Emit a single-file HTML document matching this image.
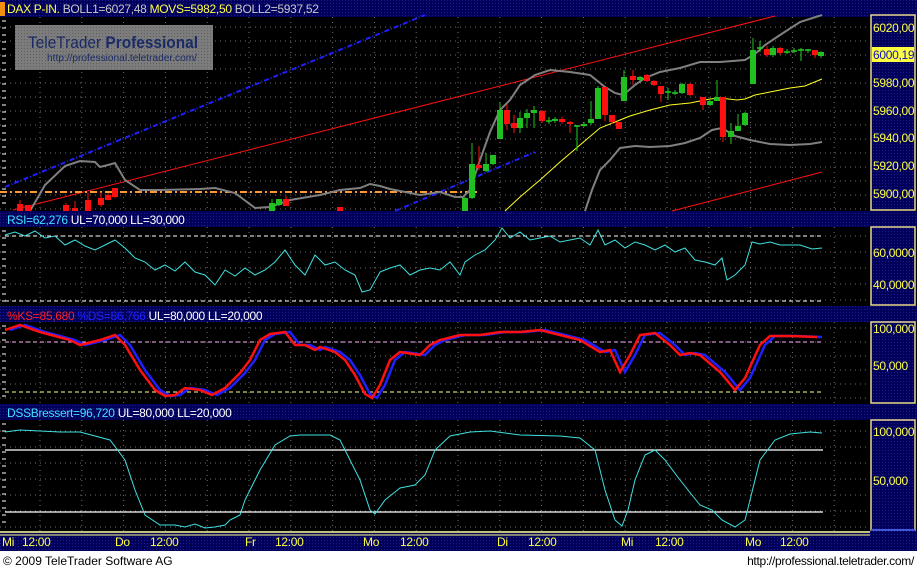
<!DOCTYPE html>
<html><head><meta charset="utf-8">
<style>
html,body{margin:0;padding:0;background:#000;width:917px;height:569px;overflow:hidden}
svg{display:block}
text{font-family:"Liberation Sans",sans-serif}
</style></head><body>
<svg id="s" width="917" height="569" viewBox="0 0 917 569" xmlns="http://www.w3.org/2000/svg">
<defs>
<pattern id="nv" width="3" height="3" patternUnits="userSpaceOnUse">
<rect width="3" height="3" fill="#00005a"/><rect width="1" height="1" fill="#1c1c90"/></pattern>
<pattern id="lg" width="3" height="3" patternUnits="userSpaceOnUse">
<rect width="3" height="3" fill="#7c7c7c"/><rect width="1" height="1" fill="#606060"/></pattern>
</defs>
<rect width="917" height="569" fill="#000"/>
<rect x="0" y="0" width="917" height="17" fill="url(#nv)"/>
<rect x="0" y="2" width="5" height="14" fill="#f0900f"/>
<rect x="0" y="211" width="917" height="16" fill="url(#nv)"/>
<rect x="0" y="306" width="917" height="16" fill="url(#nv)"/>
<rect x="0" y="404" width="917" height="16" fill="url(#nv)"/>
<rect x="0" y="531" width="917" height="20" fill="url(#nv)"/>
<line x1="0" y1="532" x2="870" y2="532" stroke="#ffff80" stroke-width="1.5"/>
<line x1="0" y1="535" x2="870" y2="535" stroke="#ffff80" stroke-width="1"/>
<rect x="0" y="551" width="917" height="18" fill="#fff"/>
<g stroke="#e8d890" stroke-width="1.5" fill="url(#nv)">
<rect x="871" y="15" width="44" height="195"/>
<rect x="871" y="227" width="44" height="78"/>
<rect x="871" y="322" width="44" height="81"/>
<rect x="871" y="420" width="44" height="110"/>
</g>
<rect x="871" y="531" width="46" height="20" fill="url(#nv)"/>
<line x1="871" y1="530" x2="915" y2="530" stroke="#3050ff" stroke-width="1.5"/>
<g id="grid"></g>
<rect x="15" y="25" width="198" height="45" fill="url(#lg)"/>
<text x="28" y="48" font-size="17" fill="#1a2a66" textLength="170" lengthAdjust="spacingAndGlyphs">TeleTrader <tspan font-weight="bold">Professional</tspan></text>
<text x="47" y="61" font-size="10" fill="#1a2a66" textLength="150" lengthAdjust="spacingAndGlyphs">http://professional.teletrader.com/</text>
<text x="7" y="13" font-size="12" letter-spacing="-0.3"><tspan fill="#ffff40">DAX P-IN.</tspan><tspan fill="#c8c8c8"> BOLL1=6027,48</tspan><tspan fill="#ffff40"> MOVS=5982,50</tspan><tspan fill="#c8c8c8"> BOLL2=5937,52</tspan></text>
<text x="7" y="224" font-size="12" letter-spacing="-0.3"><tspan fill="#40e0ff">RSI=62,276</tspan><tspan fill="#fff"> UL=70,000 LL=30,000</tspan></text>
<text x="7" y="320" font-size="12" letter-spacing="-0.3"><tspan fill="#ff2020">%KS=85,680</tspan><tspan fill="#2020ff"> %DS=86,766</tspan><tspan fill="#fff"> UL=80,000 LL=20,000</tspan></text>
<text x="7" y="417" font-size="12" letter-spacing="-0.3"><tspan fill="#40e0ff">DSSBressert=96,720</tspan><tspan fill="#fff"> UL=80,000 LL=20,000</tspan></text>
<polyline fill="none" stroke="#2020ff" stroke-width="2" stroke-dasharray="5,2,1,2" points="5,187 425,15"/>
<polyline fill="none" stroke="#2020ff" stroke-width="2" stroke-dasharray="5,2,1,2" points="395,211 535,152"/>
<line x1="13" y1="210" x2="775" y2="16" stroke="#ff1010" stroke-width="1"/>
<line x1="672" y1="211" x2="822" y2="172" stroke="#ff1010" stroke-width="1"/>
<line x1="0" y1="192" x2="478" y2="192" stroke="#ff9a30" stroke-width="2" stroke-dasharray="7,3,2,3"/>
<polyline fill="none" stroke="#808080" stroke-width="2" points="30,211 45,185 65,166 80,161 95,162 100,167 108,165 115,163 125,180 140,190 160,190 200,189 215,188 235,193 255,208 270,207 290,200 320,195 340,190 360,188 370,184 380,186 390,189 420,195 440,192 455,197 463,197 470,190 480,160 490,132 500,110 510,100 520,85 535,75 550,70 570,72 590,75 605,87 615,93 623,95 635,85 645,78 660,72 680,68 700,62 720,62 745,60 755,54 765,45 780,35 800,22 822,15"/>
<polyline fill="none" stroke="#808080" stroke-width="2" points="585,211 592,190 600,170 610,160 620,148 635,146 650,147 670,146 685,143 700,138 712,130 722,128 735,136 750,140 770,144 790,145 810,144 822,142"/>
<polyline fill="none" stroke="#ffff20" stroke-width="1" points="505,211 520,197 540,180 560,162 580,145 600,128 615,122 630,116 650,110 670,105 690,103 710,99 720,98 737,100 745,99 755,95 770,92 790,88 805,86 822,79"/>
<g id="candles"></g>
<line x1="5" y1="236" x2="823" y2="236" stroke="#fff" stroke-dasharray="4,3"/>
<line x1="5" y1="301" x2="823" y2="301" stroke="#fff" stroke-dasharray="4,3"/>
<polyline fill="none" stroke="#40e0e0" stroke-width="1" points="5,235 15,232 25,236 35,231 45,238 55,236 65,245 75,240 85,246 95,250 105,245 115,240 125,248 135,258 145,262 155,270 165,265 175,271 185,262 195,272 205,275 215,285 225,270 235,276 245,268 255,275 265,270 275,262 285,250 295,265 305,275 315,255 325,265 335,262 345,270 355,275 362,292 370,290 380,272 390,268 400,265 410,275 420,270 430,268 440,270 450,262 460,275 465,262 475,255 485,250 495,240 502,228 510,238 520,232 530,240 540,238 550,236 560,242 570,240 580,238 590,245 598,230 605,245 615,240 625,248 635,242 645,245 655,250 665,245 675,252 685,248 695,260 705,262 715,265 722,258 727,280 735,275 745,265 752,242 760,244 770,242 780,245 800,245 812,249 822,248"/>
<line x1="5" y1="342" x2="823" y2="342" stroke="#ffb0ff" stroke-dasharray="4,3"/>
<line x1="5" y1="392" x2="823" y2="392" stroke="#ffff90" stroke-dasharray="4,3"/>
<polyline id="kb" fill="none" stroke="#2020ff" stroke-width="2.5" transform="translate(5,0)" points=""/>
<polyline id="kr" fill="none" stroke="#ff1010" stroke-width="2.5" points="5,330 20,325 40,332 70,340 80,345 100,340 115,335 125,345 140,370 155,390 165,396 175,395 185,388 200,390 212,395 225,388 240,373 250,360 260,340 270,334 285,332 295,345 305,345 315,350 320,347 335,352 345,360 355,375 365,394 372,398 380,385 390,360 400,352 420,355 430,345 440,340 460,335 480,335 500,332 520,332 540,330 560,335 580,340 600,352 610,350 620,372 630,355 640,335 655,333 670,345 680,355 690,353 700,355 720,372 735,390 745,378 760,345 770,336 790,336 817,337"/>
<line x1="5" y1="450" x2="823" y2="450" stroke="#fff" stroke-width="1.2"/>
<line x1="5" y1="512" x2="823" y2="512" stroke="#fff" stroke-width="1.2"/>
<polyline fill="none" stroke="#40e0e0" stroke-width="1" points="5,432 20,430 40,431 60,432 80,432 110,440 125,460 135,490 145,515 160,525 175,525 185,527 195,524 205,528 215,527 225,525 230,520 240,515 245,500 260,470 275,445 290,436 300,435 330,435 340,440 360,480 370,510 375,514 385,500 400,488 415,485 425,475 435,450 450,436 470,432 490,431 520,435 560,436 580,438 595,450 605,490 615,520 622,526 628,510 635,480 645,455 655,450 665,460 680,480 700,505 712,510 722,520 735,527 745,520 750,500 760,460 775,440 790,434 810,432 822,433"/>
<g font-size="12" fill="#ffff40" letter-spacing="-0.3">
<text x="873" y="32">6020,00</text>
<rect x="872" y="47" width="42" height="15" fill="#ffff40"/>
<text x="873" y="59" fill="#1010c0">6000,19</text>
<text x="873" y="87">5980,00</text>
<text x="873" y="115">5960,00</text>
<text x="873" y="142">5940,00</text>
<text x="873" y="170">5920,00</text>
<text x="873" y="198">5900,00</text>
<text x="873" y="257">60,0000</text>
<text x="873" y="289">40,0000</text>
<text x="873" y="333">100,000</text>
<text x="873" y="370">50,000</text>
<text x="873" y="436">100,000</text>
<text x="873" y="485">50,000</text>
</g>
<g font-size="12" fill="#ffff40" letter-spacing="-0.3">
<text x="2" y="546">Mi</text><text x="22" y="546">12:00</text>
<text x="115" y="546">Do</text><text x="150" y="546">12:00</text>
<text x="245" y="546">Fr</text><text x="275" y="546">12:00</text>
<text x="363" y="546">Mo</text><text x="400" y="546">12:00</text>
<text x="497" y="546">Di</text><text x="528" y="546">12:00</text>
<text x="621" y="546">Mi</text><text x="655" y="546">12:00</text>
<text x="745" y="546">Mo</text><text x="780" y="546">12:00</text>
</g>
<text x="3" y="565" font-size="12" fill="#000">© 2009 TeleTrader Software AG</text>
<text x="914" y="565" font-size="12" fill="#000" text-anchor="end" letter-spacing="-0.3">http://professional.teletrader.com/</text>
</svg>
<script>
var NS="http://www.w3.org/2000/svg";
function el(p,t,a){var e=document.createElementNS(NS,t);for(var k in a)e.setAttribute(k,a[k]);p.appendChild(e);return e;}
var g=document.getElementById("grid");
var panels=[[17,211,27,14],[227,306,236,16],[322,404,328,14],[420,531,431,16]];
panels.forEach(function(p){
  for(var y=p[2];y<p[1];y+=p[3]) el(g,"line",{x1:0,x2:870,y1:y,y2:y,stroke:"#707070","stroke-dasharray":"1,4"});
  for(var x=40;x<870;x+=41.8) el(g,"line",{x1:x,x2:x,y1:p[0],y2:p[1],stroke:"#707070","stroke-dasharray":"1,4"});
  for(var y=p[0]+4;y<p[1]-2;y+=7) el(g,"line",{x1:2,x2:6,y1:y,y2:y,stroke:"#fff"});
});
document.getElementById("kb").setAttribute("points",document.getElementById("kr").getAttribute("points"));
var c=document.getElementById("candles");
var d=[[20,204,211,200,211],[28,205,211,205,211],[66,205,211,203,211],[75,208,211,201,211],[88,200,211,193,211],[101,198,205,192,207],[108,195,200,193,200],[115,188,197,188,198],
[272,211,203,199,211],[279,205,199,199,206],[286,199,206,196,206],[340,207,211,207,211],
[465,211,198,197,211],[472,198,164,143,199],[479,165,168,146,170],[486,171,164,153,172],[493,164,155,155,165],[500,139,110,102,139],[507,110,124,104,130],[514,123,128,115,133],[520,128,118,112,133],[527,118,113,109,128],[534,113,110,106,128],[542,111,121,110,123],[549,121,121,117,124],[555,121,119,117,123],[562,119,122,117,124],[570,122,124,121,133],[577,126,126,125,151],[584,126,124,122,127],[591,123,119,101,125],[598,119,88,86,119],[605,87,115,87,121],[612,115,122,115,124],[619,122,129,122,129],[624,101,77,70,101],[633,76,80,70,85],[640,80,77,76,82],[647,75,81,74,82],[654,81,85,80,86],[661,86,94,86,102],[668,92,92,88,100],[675,93,93,90,95],[682,93,84,83,94],[690,84,95,83,96],[703,97,105,97,110],[710,105,101,100,106],[717,101,97,80,101],[723,97,137,97,142],[731,137,131,123,144],[738,131,126,114,131],[745,125,113,112,126],[753,84,50,38,84],[760,48,48,41,52],[767,49,55,46,57],[773,55,48,46,57],[780,48,53,47,55],[787,52,52,49,54],[794,51,51,48,53],[801,50,50,48,61],[808,50,50,49,53],[815,50,55,50,58],[821,56,52,51,58]];
d.forEach(function(k){
  var up=k[2]<k[1], col=(k[1]==k[2])?"#20d020":(up?"#20c020":"#ff1010");
  el(c,"line",{x1:k[0],x2:k[0],y1:k[3],y2:k[4],stroke:col,"stroke-width":1});
  var t=Math.min(k[1],k[2]),h=Math.max(1.5,Math.abs(k[1]-k[2]));
  if(k[1]==k[2]) el(c,"line",{x1:k[0]-3,x2:k[0]+3,y1:k[1],y2:k[1],stroke:col,"stroke-width":1.5});
  else el(c,"rect",{x:k[0]-3,y:t,width:6,height:h,fill:col});
});
</script>
</body></html>
